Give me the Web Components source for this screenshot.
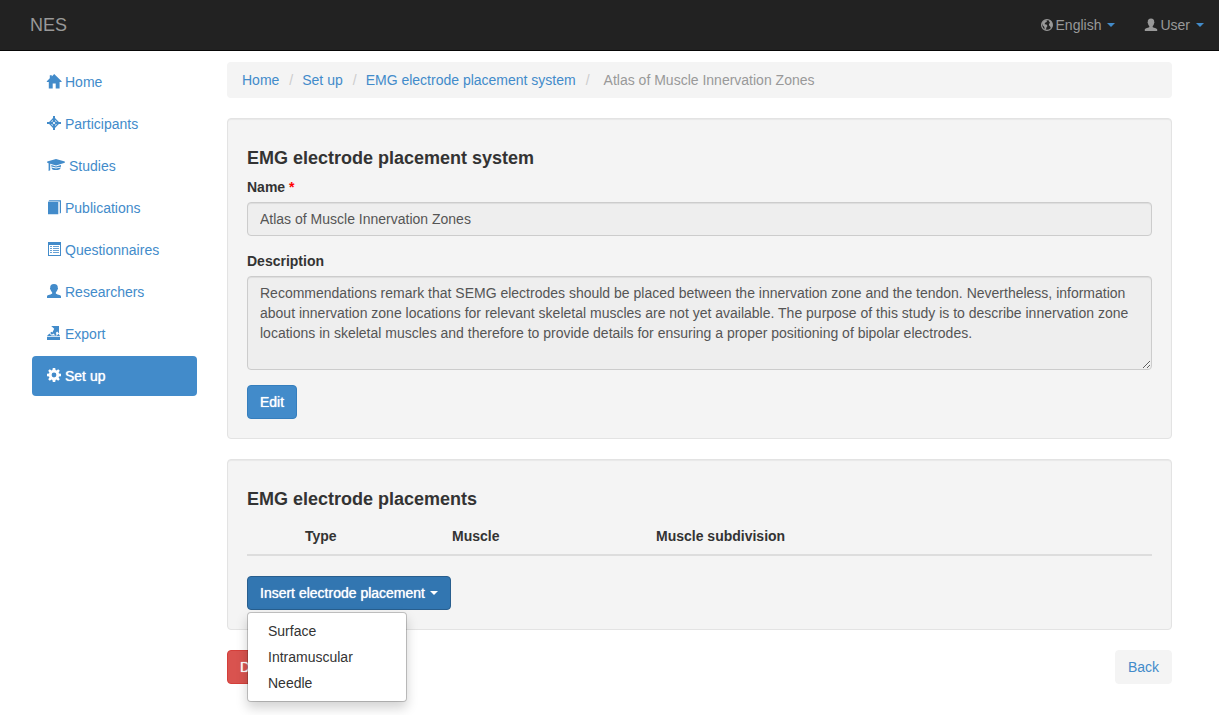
<!DOCTYPE html>
<html lang="en">
<head>
<meta charset="utf-8">
<meta name="viewport" content="width=device-width, initial-scale=1">
<title>NES</title>
<style>
:root{--link:#428bca;--panel:#f4f4f4;--text:#333}
body{margin:0;background:#fff;color:var(--text);font:14px/20px "Liberation Sans",Arial,sans-serif}
</style>
</head>
<body>
<nes-app></nes-app>
<script>
const define = (name, html, setup) => {
  const template = document.createElement('template');
  template.innerHTML = html;
  customElements.define(name, class extends HTMLElement {
    connectedCallback() {
      if (this.shadowRoot) return;
      const root = this.attachShadow({ mode: 'open' });
      root.append(template.content.cloneNode(true));
      if (setup) setup(this, root);
    }
  });
};

const icons = {
  home: [14, '<path d="M7.2 0 14.6 7.3V8H12.6V14.5H8.7V9.6H5.7V14.5H1.8V8H-.2V7.3L2.8 4.3V1.2H4.8V2.4Z"/>'],
  participants: [14, '<path fill-rule="evenodd" d="M6 0H8V2.1L11.9 6H14V8H11.9L8 11.9V14H6V11.9L2.1 8H0V6H2.1L6 2.1Z"/><path fill="#fff" d="M5.8 4V5.2L5.2 5.8H4ZM8.2 4V5.2L8.8 5.8H10ZM4 8.2H5.2L5.8 8.8V10ZM10 8.2H8.8L8.2 8.8V10Z"/><circle cx="7" cy="7" r="1.1" fill="#fff"/>'],
  studies: [18, '<path d="M.2 3.6 9 1 17.8 3.6V4.8L9 7.4 3.2 5.7V12.2L1.6 13V5.2L.2 4.8ZM4.3 7 9 8.5 14 7V8.8L9 9.6 4.3 8.5ZM4.3 9.4 9 10.4 14 9.4 12.8 11.2Q9 12.8 5.4 11.4Z"/>'],
  publications: [14, '<path d="M1 2H11.3V14.3H1ZM2.4 .3H14V12.8L12.8 13.8V1.5H1Z"/>'],
  questionnaires: [14, '<path fill-rule="evenodd" d="M1 0H14V14H1ZM2 3V13H13V3Z"/><path opacity=".8" d="M3 4H5V5H3ZM6 4H12V5H6ZM3 6H5V7H3ZM6 6H12V7H6ZM3 8H5V9H3ZM6 8H12V9H6ZM3 10H5V11H3ZM6 10H12V11H6Z"/>'],
  user: [14, '<path d="M7 0C9.7 0 11 1.4 10.8 4 11.2 4.3 11.1 5.2 10.5 5.6 10.2 7.2 9.2 8 8.8 8.5V9.6C9 10.5 14 10.9 14 12.4V14H0V12.4C0 10.9 5 10.5 5.2 9.6V8.5C4.8 8 3.8 7.2 3.5 5.6 2.9 5.2 2.8 4.3 3.2 4 3 1.4 4.3 0 7 0Z"/>'],
  person: [12, '<path d="M6 .5C8.3 .5 9.4 1.8 9.2 4 9.6 4.4 9.5 5.1 9 5.4 8.8 6.8 8 7.5 7.7 7.9V9C7.8 9.8 12.2 10.3 12.2 11.4V13H-.2V11.4C-.2 10.3 4.2 9.8 4.3 9V7.9C4 7.5 3.2 6.8 3 5.4 2.5 5.1 2.4 4.4 2.8 4 2.6 1.8 3.7 .5 6 .5Z"/>'],
  export: [14, '<path d="M4.2 0H12V7.4L10.2 5.6 8.7 7.1 9.6 8.2 8.4 9.4 6.3 7.4 4.9 8.8 3.2 7 4.4 5.8 5.4 6.4 7.2 2.8ZM2.4 7.4 4.4 9.5H10L11.5 7.8 13 10H0ZM0 10.8H13V14H0Z"/>'],
  setup: [14, '<path fill-rule="evenodd" d="M5.8 0H8.2L8.6 2 9.5 2.4 11.2 1.2 12.8 2.8 11.6 4.5 12 5.4 14 5.8V8.2L12 8.6 11.6 9.5 12.8 11.2 11.2 12.8 9.5 11.6 8.6 12 8.2 14H5.8L5.4 12 4.5 11.6 2.8 12.8 1.2 11.2 2.4 9.5 2 8.6 0 8.2V5.8L2 5.4 2.4 4.5 1.2 2.8 2.8 1.2 4.5 2.4 5.4 2ZM7 4.6A2.4 2.4 0 1 0 7 9.4 2.4 2.4 0 1 0 7 4.6Z"/>'],
  globe: [12, '<circle cx="6" cy="7" r="5.4" fill="none" stroke="currentColor" stroke-width="1.2"/><path d="M1 5 2.6 3 5 2 6.1 3 5.3 4.3 4 4.8 3.7 6.3 5.6 6.6 6.5 8 5.4 9.4 5 11.7 3.6 11.4 3.3 9 1.7 7.3ZM8.4 2 10 3 11.2 5.4 11.3 8 10 10.2 9 8.3 7.9 7.2 8 5.9 9.1 4.8 8.1 3.8Z"/>']
};

define('nes-icon', `
<style>
:host{display:inline-block;flex:none;height:14px}
svg{display:block;overflow:visible;fill:currentColor}
</style>`, (host, root) => {
  const [width, shape] = icons[host.getAttribute('name')];
  root.innerHTML += `<svg width="${width}" height="14" viewBox="0 0 ${width} 14" aria-hidden="true">${shape}</svg>`;
});

define('nes-caret', `
<style>
:host{display:inline-block;width:0;height:0;border:4px solid transparent;border-top-color:currentColor;border-bottom-width:0}
</style>`);

define('nes-menu-link', `
<style>
:host{display:block}
a{display:flex;align-items:center;gap:3px;color:#999;text-decoration:none}
nes-caret{color:var(--link);margin-left:3px}
</style>
<a href="#"><slot></slot><nes-caret></nes-caret></a>`, (host, root) => {
  const icon = document.createElement('nes-icon');
  icon.setAttribute('name', host.getAttribute('icon'));
  root.querySelector('a').prepend(icon);
});

define('nes-navbar', `
<style>
:host{display:block;background:#222;border-bottom:1px solid #080808}
nav{display:flex;align-items:center;justify-content:space-between;min-height:50px;padding:0 15px 0 30px}
.brand{font-size:18px;color:#999;text-decoration:none}
.menus{display:flex;gap:30px}
</style>
<nav aria-label="Top">
  <a class="brand" href="#">NES</a>
  <div class="menus"><slot></slot></div>
</nav>`);

define('nes-side-item', `
<style>
:host{display:block}
a{display:flex;align-items:center;gap:4px;padding:10px 15px;border-radius:4px;color:var(--link);text-decoration:none}
nes-icon{margin-bottom:2px}
:host([active]) a{background:var(--link);color:#fff;text-shadow:0 0 1px #fff}
</style>
<a href="#"><slot></slot></a>`, (host, root) => {
  const icon = document.createElement('nes-icon');
  icon.setAttribute('name', host.getAttribute('icon'));
  root.querySelector('a').prepend(icon);
});

define('nes-sidebar', `
<style>:host{display:block}nav{display:grid;gap:2px}</style>
<nav aria-label="Main"><slot></slot></nav>`);

define('nes-breadcrumb', `
<style>
:host{display:block;background:var(--panel);border-radius:4px}
ol{display:flex;flex-wrap:wrap;list-style:none;margin:0;padding:8px 15px}
li+li::before{content:"/";color:#ccc;padding:0 9px 0 10px}
li:last-child{color:#999}
li:last-child::before{padding-right:14px}
a{color:var(--link);text-decoration:none}
</style>
<nav aria-label="Breadcrumb"><ol>
  <li><a href="#">Home</a></li>
  <li><a href="#">Set up</a></li>
  <li><a href="#">EMG electrode placement system</a></li>
  <li aria-current="page">Atlas of Muscle Innervation Zones</li>
</ol></nav>`);

define('nes-well', `
<style>
:host{display:block;padding:19px;background:var(--panel);border:1px solid #e3e3e3;border-radius:4px;box-shadow:inset 0 1px 1px rgba(0,0,0,.05)}
h4{margin:10px 0 9px;font-size:18px;line-height:20px;font-weight:bold}
</style>
<h4></h4><slot></slot>`, (host, root) => {
  root.querySelector('h4').textContent = host.getAttribute('heading');
});

define('nes-field', `
<style>
:host{display:block;margin-bottom:15px}
label{display:block;margin-bottom:5px;font-weight:bold}
.star{color:#f00}
input,textarea{display:block;box-sizing:border-box;width:100%;margin:0;padding:6px 12px;font:inherit;color:#555;background:#eee;border:1px solid #ccc;border-radius:4px;box-shadow:inset 0 1px 1px rgba(0,0,0,.075);cursor:not-allowed}
input{height:34px}
textarea{resize:vertical;overflow:auto}
</style>
<label for="control"></label>`, (host, root) => {
  const label = root.querySelector('label');
  label.textContent = host.getAttribute('label');
  if (host.hasAttribute('required')) label.insertAdjacentHTML('beforeend', ' <span class="star">*</span>');
  const control = document.createElement(host.hasAttribute('multiline') ? 'textarea' : 'input');
  control.id = 'control';
  control.disabled = true;
  if (host.hasAttribute('multiline')) control.rows = 4;
  control.value = host.getAttribute('value');
  root.append(control);
});

define('nes-button', `
<style>
:host{display:inline-block;vertical-align:top}
button{display:flex;align-items:center;gap:5px;margin:0;padding:6px 12px;font:inherit;color:#fff;background:var(--link);border:1px solid #357ebd;border-radius:4px;text-shadow:0 0 1px #fff;cursor:pointer;white-space:nowrap}
:host([kind=danger]) button{background:#d9534f;border-color:#d43f3a}
:host([kind=open]) button{background:#3276b1;border-color:#285e8e}
:host([kind=plain]) button{color:var(--link);background:var(--panel);border-color:var(--panel);text-shadow:none}
</style>
<button type="button"><slot></slot></button>`);

define('nes-dropdown', `
<style>
:host{display:inline-block;position:relative;vertical-align:top}
ul{position:absolute;z-index:10;top:100%;left:0;box-sizing:border-box;min-width:160px;margin:2px 0 0;padding:5px 0;list-style:none;background:#fff;background-clip:padding-box;border:1px solid rgba(0,0,0,.2);border-radius:4px;box-shadow:0 6px 12px rgba(0,0,0,.175)}
a{display:block;padding:3px 20px;color:var(--text);text-decoration:none}
</style>
<nes-button kind="open">Insert electrode placement<nes-caret></nes-caret></nes-button>
<ul>
  <li><a href="#">Surface</a></li>
  <li><a href="#">Intramuscular</a></li>
  <li><a href="#">Needle</a></li>
</ul>`);

define('nes-placement-table', `
<style>
:host{display:block;margin-bottom:20px}
table{width:100%;table-layout:fixed;border-collapse:separate;border-spacing:0}
th,td{padding:8px;text-align:left;border-bottom:2px solid #ddd}
.select{width:34px}.type{width:131px}.muscle{width:188px}
</style>
<table><thead><tr>
  <td class="select"></td>
  <th class="type" scope="col">Type</th>
  <th class="muscle" scope="col">Muscle</th>
  <th scope="col">Muscle subdivision</th>
</tr></thead></table>`);

define('nes-app', `
<style>
:host{display:block}
.page{display:grid;grid-template-columns:165px minmax(0,1fr);gap:30px;align-items:start;max-width:1140px;margin:0 auto;padding:11px 15px 31px 0}
.stack{display:grid;gap:20px}
.actions{display:flex;justify-content:space-between}
</style>
<nes-navbar>
  <nes-menu-link icon="globe">English</nes-menu-link>
  <nes-menu-link icon="person">User</nes-menu-link>
</nes-navbar>
<div class="page">
  <nes-sidebar>
    <nes-side-item icon="home">Home</nes-side-item>
    <nes-side-item icon="participants">Participants</nes-side-item>
    <nes-side-item icon="studies">Studies</nes-side-item>
    <nes-side-item icon="publications">Publications</nes-side-item>
    <nes-side-item icon="questionnaires">Questionnaires</nes-side-item>
    <nes-side-item icon="user">Researchers</nes-side-item>
    <nes-side-item icon="export">Export</nes-side-item>
    <nes-side-item icon="setup" active>Set up</nes-side-item>
  </nes-sidebar>
  <main class="stack">
    <nes-breadcrumb></nes-breadcrumb>
    <nes-well heading="EMG electrode placement system">
      <nes-field label="Name" required value="Atlas of Muscle Innervation Zones"></nes-field>
      <nes-field label="Description" multiline value="Recommendations remark that SEMG electrodes should be placed between the innervation zone and the tendon. Nevertheless, information about innervation zone locations for relevant skeletal muscles are not yet available. The purpose of this study is to describe innervation zone locations in skeletal muscles and therefore to provide details for ensuring a proper positioning of bipolar electrodes."></nes-field>
      <nes-button>Edit</nes-button>
    </nes-well>
    <nes-well heading="EMG electrode placements">
      <nes-placement-table></nes-placement-table>
      <nes-dropdown></nes-dropdown>
    </nes-well>
    <div class="actions">
      <nes-button kind="danger">Delete</nes-button>
      <nes-button kind="plain">Back</nes-button>
    </div>
  </main>
</div>`);
</script>
</body>
</html>
